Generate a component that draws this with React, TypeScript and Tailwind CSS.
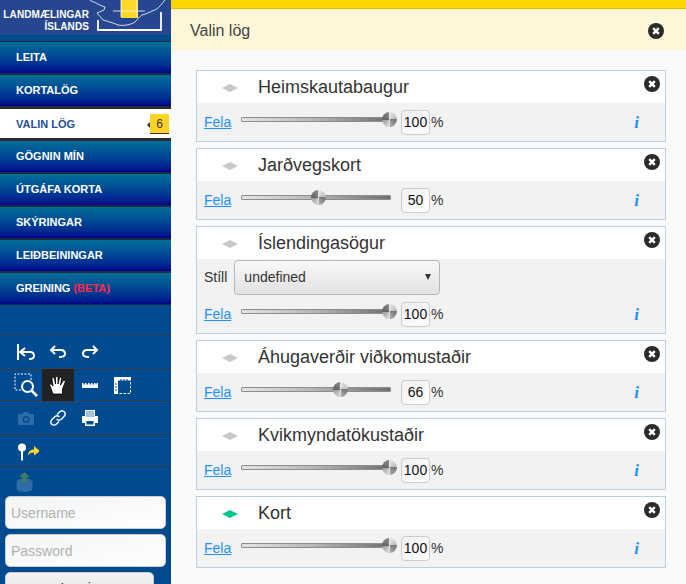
const navItems = ["LEITA", "KORTALÖG", "VALIN LÖG", "GÖGNIN MÍN", "ÚTGÁFA KORTA", "SKÝRINGAR", "LEIÐBEININGAR"];

const layers = [
  { name: "Heimskautabaugur", value: 100 },
  { name: "Jarðvegskort", value: 50 },
  { name: "Íslendingasögur", value: 100, style: true },
  { name: "Áhugaverðir viðkomustaðir", value: 66 },
  { name: "Kvikmyndatökustaðir", value: 100 },
  { name: "Kort", value: 100, active: true },
];

function CloseIcon() {
  return (
    <svg width="16" height="16" viewBox="0 0 16 16" className="shrink-0">
      <circle cx="8" cy="8" r="8" fill="#2b2b2b" />
      <path d="M5.2 5.2 10.8 10.8M10.8 5.2 5.2 10.8" stroke="#fff" strokeWidth="2.4" />
    </svg>
  );
}

function Logo() {
  return (
    <div className="flex h-[35px] shrink-0 overflow-hidden bg-[#26478f]">
      <div className="w-[90px] shrink-0 whitespace-nowrap pr-px pt-[9px] text-right text-[10px] font-bold leading-[12px] tracking-[0.1px] text-white">
        <div>LANDMÆLINGAR</div>
        <div>ÍSLANDS</div>
      </div>
      <svg width="81" height="35" viewBox="0 0 81 35" className="shrink-0">
        <rect x="31" y="-2" width="17" height="20" fill="#ffd92a" />
        <path d="M23 11H55M31 0V17M47 0V17" stroke="#fff" strokeWidth="0.8" fill="none" />
        <path d="M-2 0C4 1 8 5 15 7L14 10 7 13 13 20 23 23 28 25C34 26 40 25 45 22 48 19 50 16 52 15 56 14 60 12 62 11 66 10 68 8 70 6L75 0" fill="none" stroke="#fff" strokeWidth="0.8" />
        <path d="M8 20V30H71V12" fill="none" stroke="#fff" strokeWidth="1.8" />
      </svg>
    </div>
  );
}

function NavItem({ label, active }: { label: React.ReactNode; active?: boolean }) {
  if (active) {
    return (
      <div className="relative flex h-[33px] items-center border-b-2 border-t-2 border-[#2b2b2b] bg-white pl-4 pt-px text-[11px] font-bold text-[#1f4f96]">
        {label}
        <span className="absolute right-[2px] top-[5px] flex h-[20px] w-[19px] items-center justify-center border-b border-[#333] bg-[#ffd324] text-[12px] font-normal text-[#333]">6</span>
        <span className="absolute right-[21px] top-[13px] h-0 w-0 border-y-[3px] border-r-[3px] border-y-transparent border-r-[#333]" />
      </div>
    );
  }
  return (
    <div className="flex h-[33px] items-center border-b border-t border-[#1f2a3a] bg-gradient-to-b from-[#006f98] to-[#00008c] pl-4 text-[11px] font-bold text-white">
      {label}
    </div>
  );
}

function ToolRow({ children }: { children?: React.ReactNode }) {
  return <div className="flex h-[33px] border-b border-[#38404f] pl-[10px]">{children}</div>;
}

function Tool({ children, active }: { children: React.ReactNode; active?: boolean }) {
  return (
    <div className={`flex h-[32px] w-[32px] items-center justify-center ${active ? "bg-[#222]" : ""}`}>{children}</div>
  );
}

function Toolbar() {
  return (
    <div className="mt-[30px] shrink-0 border-t border-[#38404f]">
      <ToolRow>
        <Tool>
          <svg width="20" height="16" viewBox="0 0 20 16" fill="none" stroke="#fff" strokeWidth="2">
            <path d="M2 0V16" />
            <path d="M4 8H14C17 8 18 10 18 12 18 14 16 15 13 15" />
            <path d="M9 4 4 8 9 12" />
          </svg>
        </Tool>
        <Tool>
          <svg width="18" height="14" viewBox="0 0 18 14" fill="none" stroke="#fff" strokeWidth="2">
            <path d="M2 5H12C15 5 16 7 16 9 16 11 14 12 10 12" />
            <path d="M6 1 2 5 6 9" />
          </svg>
        </Tool>
        <Tool>
          <svg width="18" height="14" viewBox="0 0 18 14" fill="none" stroke="#fff" strokeWidth="2">
            <path d="M16 5H6C3 5 2 7 2 9 2 11 4 12 8 12" />
            <path d="M12 1 16 5 12 9" />
          </svg>
        </Tool>
      </ToolRow>
      <ToolRow>
        <Tool>
          <svg width="24" height="24" viewBox="0 0 24 24" fill="none" stroke="#fff">
            <path d="M7 17H1V1H17V7" strokeDasharray="2 1.5" />
            <circle cx="13.5" cy="13.5" r="5.5" strokeWidth="2" fill="#004a8f" />
            <path d="M17.5 17.5 23 23" strokeWidth="2.6" />
          </svg>
        </Tool>
        <Tool active>
          <svg width="18" height="19" viewBox="0 0 18 19">
            <path d="M4 18 1 10C0 8 2 7 3 9L4 10 3 3C3 1 5 1 5.500 3L6.500 8 6.500 1.500C6.500 0 9 0 9 1.500V8L10.500 2C11 0.500 13 1 12.500 3L11.500 9 14 5C15 3.500 17 4.500 16 6.500L13.500 13V18Z" fill="#fff" stroke="#000" strokeWidth="0.8" />
          </svg>
        </Tool>
        <Tool>
          <svg width="16" height="6" viewBox="0 0 16 6">
            <path d="M0 1H1.500V2.500H3V1H4.500V2.500H6V1H7.500V2.500H9V1H10.500V2.500H12V1H13.500V2.500H14.500V1H16V6H0Z" fill="#fff" />
          </svg>
        </Tool>
        <Tool>
          <svg width="17" height="17" viewBox="0 0 17 17" fill="none" stroke="#fff">
            <path d="M0 0H17V3.500H4V17H0Z" fill="#fff" stroke="none" />
            <path d="M7 4V2M10 4V2M13 4V2" stroke="#004a8f" />
            <path d="M1 7H3M1 10H3M1 13H3" stroke="#004a8f" />
            <path d="M16.500 5V16.500H5" strokeDasharray="2.500 1.500" />
          </svg>
        </Tool>
      </ToolRow>
      <ToolRow>
        <Tool>
          <svg width="16" height="13" viewBox="0 0 16 13" fill="#2f6ba5">
            <path fillRule="evenodd" d="M1 2H4.500L6 0H10L11.500 2H15C15.500 2 16 2.500 16 3V12C16 12.500 15.500 13 15 13H1C0.500 13 0 12.500 0 12V3C0 2.500 0.500 2 1 2ZM8 4A3.500 3.500 0 1 0 8 11 3.500 3.500 0 1 0 8 4Z" />
            <circle cx="8" cy="7.500" r="2" />
          </svg>
        </Tool>
        <Tool>
          <svg width="16" height="16" viewBox="0 0 16 16" fill="none" stroke="#fff" strokeWidth="1.4">
            <path d="M7 4.500 9.500 2C11 .5 13 .5 14.500 2 15.500 3.500 15.500 5 14 6.500L11 9.500C9.500 10.500 8 10.500 6.500 9" />
            <path d="M9 11.500 6.500 14C5 15.500 3 15.500 1.500 14 .5 12.500 .5 11 2 9.500L5 6.500C6.500 5.500 8 5.500 9.500 7" />
          </svg>
        </Tool>
        <Tool>
          <svg width="16" height="16" viewBox="0 0 16 16">
            <path fillRule="evenodd" d="M3 0H13V6H16V13H13V16H3V13H0V6H3ZM4.500 1.500V7H11.500V1.500ZM4.500 11V14.500H11.500V11Z" fill="#fff" />
            <rect x="4.500" y="1.500" width="7" height="5.500" fill="#a9c4df" />
          </svg>
        </Tool>
      </ToolRow>
      <ToolRow>
        <Tool>
          <svg width="26" height="19" viewBox="0 0 26 19">
            <circle cx="9" cy="5.500" r="4" fill="#fff" />
            <path d="M8 7H10V18.500H8Z" fill="#fff" />
            <path d="M15 14C15 9 18 7.500 21 7.500V4L27 9 21 13.500V10.500C19 10.500 16 11 15 14Z" fill="#ffd92a" />
          </svg>
        </Tool>
      </ToolRow>
    </div>
  );
}

function LoginForm() {
  return (
    <div className="flex shrink-0 flex-col px-[5px] pt-[4px]">
      <div className="flex h-[20px] pl-[11px]">
        <svg width="17" height="20" viewBox="0 0 17 20">
          <path d="M0.500 10C0.500 8 4 6.500 8.500 6.500 13 6.500 16.500 8 16.500 10V16C16.500 18.500 13 20 8.500 20 4 20 0.500 18.500 0.500 16Z" fill="#2f6ba5" />
          <path d="M8.500 0 14 5H11V10H6V5H3Z" fill="#3f7b62" />
        </svg>
      </div>
      <input
        placeholder="Username"
        className="mt-[4px] h-[33px] w-[161px] rounded-[5px] border border-[#ccc] bg-gradient-to-br from-[#f2f4f6] to-white px-[5px] text-[14px] placeholder:text-[#b0b0b0]"
      />
      <input
        placeholder="Password"
        className="mt-[5px] h-[33px] w-[161px] rounded-[5px] border border-[#ccc] bg-gradient-to-br from-[#f2f4f6] to-white px-[5px] text-[14px] placeholder:text-[#b0b0b0]"
      />
      <div className="mt-[5px] flex h-[33px] w-[149px] items-center justify-center rounded-[5px] border border-[#ccc] bg-gradient-to-b from-[#f4f4f4] to-[#dcdcdc] text-[14px] text-[#333]">
        Log in
      </div>
    </div>
  );
}

function Slider({ value }: { value: number }) {
  return (
    <div className="relative mb-[5px] h-[5px] w-[150px] shrink-0 rounded-[1px] border border-[#8d8d8d] bg-gradient-to-r from-[#e4e4e4] via-[#b5b5b5] to-[#6f6f6f]">
      <span
        className="absolute top-[-6px] h-[15px] w-[15px] rounded-full bg-[conic-gradient(#e6e6e6_0,#bbb_25%,#777_25%,#aaa_50%,#ddd_50%,#999_75%,#666_75%,#888_100%)]"
        style={{ left: `${value * 1.42 - 2.5}px` }}
      />
    </div>
  );
}

function LayerCard({ name, value, style, active }: { name: string; value: number; style?: boolean; active?: boolean }) {
  return (
    <div className="w-[470px] border border-[#bccfe2]">
      <div className="flex h-[32px] items-start bg-white pl-[25px] pr-[5px]">
        <span
          className={`mt-[13px] h-[8px] w-[16px] shrink-0 [clip-path:polygon(50%_0,100%_50%,50%_100%,0_50%)] ${active ? "bg-[#00c88a]" : "bg-[#c8c8c8]"}`}
        />
        <span className="ml-[20px] mt-[4px] flex-1 text-[18px] leading-[24px] text-[#333]">{name}</span>
        <div className="mt-[5px]">
          <CloseIcon />
        </div>
      </div>
      <div className="flex flex-col bg-[#f2f2f2] pl-[7px] pr-[26px]">
        {style && (
          <div className="flex h-[36px] items-center text-[14px] text-[#333]">
            <span>Stíll</span>
            <div className="ml-[7px] flex h-[35px] w-[206px] items-center justify-between rounded-[4px] border border-[#b5b5b5] bg-gradient-to-b from-[#f8f8f8] to-[#e2e2e2] pl-[9px] pr-[8px]">
              <span>undefined</span>
              <span className="h-0 w-0 border-x-[3.5px] border-t-[6px] border-x-transparent border-t-[#333]" />
            </div>
          </div>
        )}
        <div className="flex h-[38px] items-center text-[14px]">
          <a className="w-[37px] shrink-0 text-[#1e90ff] underline">Fela</a>
          <Slider value={value} />
          <span className="ml-[10px] flex h-[25px] w-[29px] items-center justify-center rounded-[4px] border border-[#ccc] bg-gradient-to-br from-[#f0f0f0] to-white text-[#111]">
            {value}
          </span>
          <span className="ml-[1px] text-[#333]">%</span>
          <span className="ml-auto pt-[2px] font-['Liberation_Serif',serif] text-[17px] font-bold italic text-[#1e90ff]">i</span>
        </div>
      </div>
    </div>
  );
}

export default function App() {
  return (
    <div className="flex h-[584px] w-[686px] overflow-hidden bg-[#fafafa] font-['Liberation_Sans',Arial,sans-serif]">
      <aside className="flex h-full w-[171px] shrink-0 flex-col overflow-hidden bg-[#004a8f]">
        <Logo />
        <nav className="mt-[6px] flex shrink-0 flex-col">
          {navItems.map((item) => (
            <NavItem key={item} label={item} active={item === "VALIN LÖG"} />
          ))}
          <NavItem
            label={
              <span>
                GREINING <span className="text-[#ff2a4a]">(BETA)</span>
              </span>
            }
          />
        </nav>
        <Toolbar />
        <LoginForm />
      </aside>
      <main className="flex-1">
        <div className="h-[9px] border-b border-[#e8bd00] bg-[#ffd500]" />
        <div className="flex h-[41px] items-center justify-between bg-[#fdf6d8] pl-[19px] pr-[22px] pt-[2px] text-[16px] text-[#444]">
          <span>Valin lög</span>
          <CloseIcon />
        </div>
        <div className="flex flex-col gap-[6px] pl-[25px] pt-[20px]">
          {layers.map((layer) => (
            <LayerCard key={layer.name} {...layer} />
          ))}
        </div>
      </main>
    </div>
  );
}
